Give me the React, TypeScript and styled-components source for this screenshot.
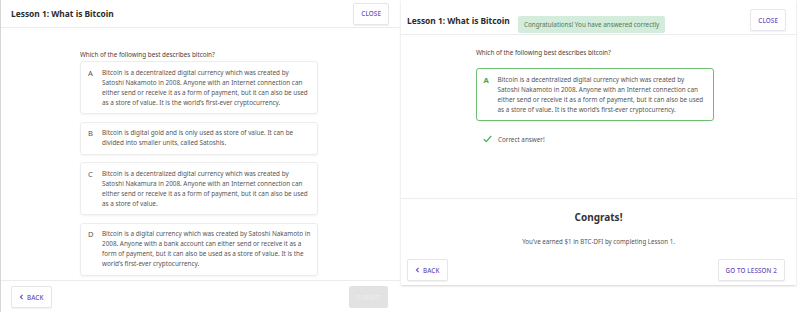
import React from "react";
import styled, { createGlobalStyle, css } from "styled-components";

const Global = createGlobalStyle`
  html, body { margin: 0; padding: 0; background: #fff; }
  body { font-family: "Noto Sans", "Open Sans", sans-serif; color: #333; }
  * { box-sizing: border-box; }
`;

const Page = styled.div`
  display: flex;
  width: 800px;
  height: 312px;
  overflow: hidden;
  background: #fff;
`;

const Panel = styled.div<{ $side: "left" | "right" }>`
  position: relative;
  display: flex;
  flex-direction: column;
  ${(p) =>
    p.$side === "left"
      ? css`
          width: 400px;
          height: 312px;
          border-left: 1px solid #d6d6d6;
        `
      : css`
          width: 395px;
          height: 285px;
          margin-left: 1px;
          box-shadow: 0 1px 2px rgba(0, 0, 0, 0.18);
        `}
`;

const Header = styled.div<{ $tall?: boolean }>`
  display: flex;
  align-items: center;
  justify-content: space-between;
  flex: none;
  height: ${(p) => (p.$tall ? "35px" : "28px")};
  padding: ${(p) => (p.$tall ? "6px 10px 0 6px" : "0 11px 0 10px")};
  border-bottom: 1px solid #ececec;
`;

const Title = styled.div`
  font-size: 8.4px;
  font-weight: 700;
  color: #2b2b2b;
`;

const Btn = styled.button<{ $disabled?: boolean }>`
  font-family: inherit;
  height: 22px;
  padding: 0 7px;
  font-size: 6.3px;
  font-weight: 500;
  letter-spacing: 0.1px;
  text-transform: uppercase;
  color: #6a4fc0;
  background: #fff;
  border: 1px solid #e6e6ea;
  border-radius: 2px;
  box-shadow: 0 1px 1px rgba(0, 0, 0, 0.06);
  display: flex;
  align-items: center;
  gap: 3px;
  ${(p) =>
    p.$disabled &&
    css`
      width: 39px;
      justify-content: center;
      background: #e2e2e2;
      color: #ececec;
      border-color: #e2e2e2;
      box-shadow: none;
    `}
`;

const Body = styled.div<{ $pl: number; $pt: number }>`
  flex: 1;
  min-height: 0;
  padding: ${(p) => p.$pt}px 0 0 ${(p) => p.$pl}px;
  display: flex;
  flex-direction: column;
`;

const Question = styled.div<{ $mb: number }>`
  font-size: 6.3px;
  line-height: 10px;
  color: #444;
  margin-bottom: ${(p) => p.$mb}px;
`;

const Cards = styled.div`
  display: flex;
  flex-direction: column;
  gap: 7.5px;
`;

const Card = styled.div<{ $correct?: boolean }>`
  width: 238px;
  display: flex;
  padding: 5.5px 6px 5.5px 7px;
  border-radius: 3px;
  border: 1px solid #ececec;
  box-shadow: 0 1px 2px rgba(0, 0, 0, 0.05);
  ${(p) =>
    p.$correct &&
    css`
      border: 1.5px solid #6dbd72;
      padding: 5.5px 6px 5.5px 6.5px;
    `}
`;

const Letter = styled.div<{ $correct?: boolean }>`
  width: 14px;
  flex: none;
  font-size: 7.6px;
  line-height: 10px;
  color: ${(p) => (p.$correct ? "#3fa64a" : "#555")};
  font-weight: ${(p) => (p.$correct ? 700 : 400)};
`;

const CardText = styled.div`
  font-size: 6.35px;
  line-height: 10px;
  color: #555;
`;

const Footer = styled.div<{ $pad: string; $border?: boolean }>`
  display: flex;
  flex: none;
  justify-content: space-between;
  align-items: center;
  padding: ${(p) => p.$pad};
  ${(p) => p.$border && "border-top: 1px solid #ececec;"}
`;

const Toast = styled.div`
  position: absolute;
  left: 117px;
  top: 16px;
  height: 17px;
  padding: 0 6px;
  display: flex;
  align-items: center;
  background: #d4ecdb;
  border-radius: 2px;
  font-size: 6.3px;
  color: #4e7a5c;
`;

const Feedback = styled.div`
  display: flex;
  align-items: center;
  gap: 6px;
  margin: 13.5px 0 0 7px;
  font-size: 6.3px;
  line-height: 9px;
  color: #555;
`;

const Congrats = styled.div`
  border-top: 1px solid #ececec;
  margin-top: auto;
  display: flex;
  flex: none;
  flex-direction: column;
  align-items: center;
  padding-top: 11px;
`;

const CongratsTitle = styled.div`
  font-size: 10px;
  line-height: 14px;
  font-weight: 700;
  color: #333;
`;

const Earned = styled.div`
  margin-top: 13.5px;
  font-size: 6.2px;
  line-height: 9px;
  color: #555;
`;

const Chevron = () => (
  <svg width="5" height="6" viewBox="0 0 5 6">
    <path d="M3.6 0.8 L1.4 3 L3.6 5.2" fill="none" stroke="#6a4fc0" strokeWidth="1.1" />
  </svg>
);

const Check = () => (
  <svg width="9" height="8" viewBox="0 0 9 8">
    <path d="M0.8 4.2 L3.3 6.6 L8.2 1" fill="none" stroke="#4caf60" strokeWidth="1.3" />
  </svg>
);

const options = [
  {
    l: "A",
    t: "Bitcoin is a decentralized digital currency which was created by Satoshi Nakamoto in 2008. Anyone with an Internet connection can either send or receive it as a form of payment, but it can also be used as a store of value. It is the world’s first-ever cryptocurrency.",
  },
  {
    l: "B",
    t: "Bitcoin is digital gold and is only used as store of value. It can be divided into smaller units, called Satoshis.",
  },
  {
    l: "C",
    t: "Bitcoin is a decentralized digital currency which was created by Satoshi Nakamura in 2008. Anyone with an Internet connection can either send or receive it as a form of payment, but it can also be used as a store of value.",
  },
  {
    l: "D",
    t: "Bitcoin is a digital currency which was created by Satoshi Nakamoto in 2008. Anyone with a bank account can either send or receive it as a form of payment, but it can also be used as a store of value. It is the world’s first-ever cryptocurrency.",
  },
];

export default function App() {
  return (
    <Page>
      <Global />
      <Panel $side="left">
        <Header>
          <Title>Lesson 1: What is Bitcoin</Title>
          <Btn>Close</Btn>
        </Header>
        <Body $pl={79} $pt={22}>
          <Question $mb={1}>Which of the following best describes bitcoin?</Question>
          <Cards>
            {options.map((o) => (
              <Card key={o.l}>
                <Letter>{o.l}</Letter>
                <CardText>{o.t}</CardText>
              </Card>
            ))}
          </Cards>
        </Body>
        <Footer $pad="5px 12px 4px 10px" $border>
          <Btn>
            <Chevron />
            Back
          </Btn>
          <Btn $disabled>Submit</Btn>
        </Footer>
      </Panel>
      <Panel $side="right">
        <Header $tall>
          <Title>Lesson 1: What is Bitcoin</Title>
          <Btn>Close</Btn>
        </Header>
        <Toast>Congratulations! You have answered correctly</Toast>
        <Body $pl={75} $pt={13}>
          <Question $mb={10}>Which of the following best describes bitcoin?</Question>
          <Card $correct>
            <Letter $correct>{options[0].l}</Letter>
            <CardText>{options[0].t}</CardText>
          </Card>
          <Feedback>
            <Check />
            Correct answer!
          </Feedback>
        </Body>
        <Congrats>
          <CongratsTitle>Congrats!</CongratsTitle>
          <Earned>You’ve earned $1 in BTC-DFI by completing Lesson 1.</Earned>
        </Congrats>
        <Footer $pad="13px 11px 4px 6px">
          <Btn>
            <Chevron />
            Back
          </Btn>
          <Btn>Go to Lesson 2</Btn>
        </Footer>
      </Panel>
    </Page>
  );
}
